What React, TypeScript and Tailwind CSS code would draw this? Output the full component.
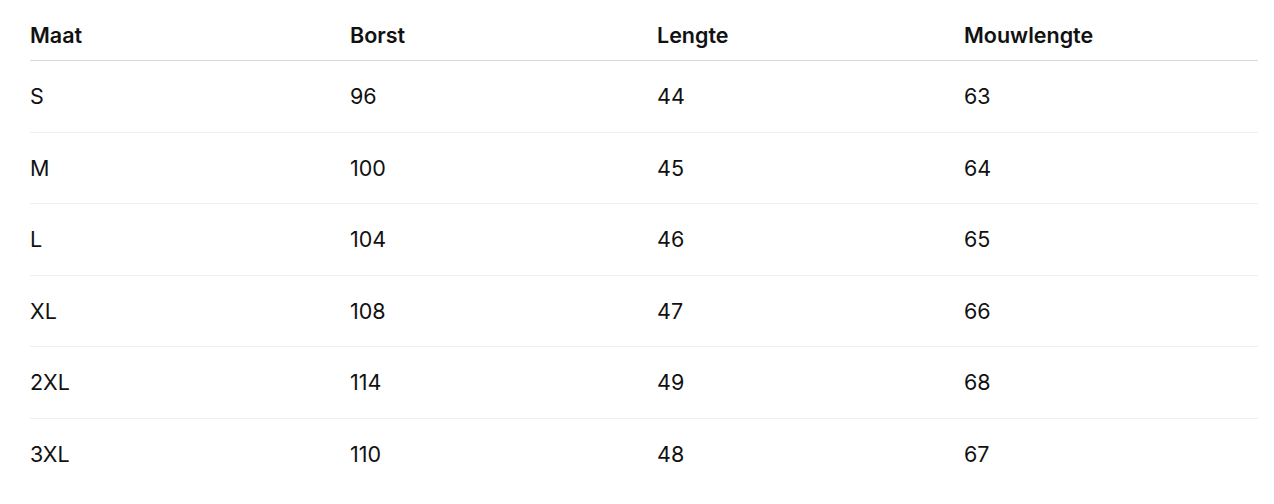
const ROWS = [
  ['S', '96', '44', '63'],
  ['M', '100', '45', '64'],
  ['L', '104', '46', '65'],
  ['XL', '108', '47', '66'],
  ['2XL', '114', '49', '68'],
  ['3XL', '110', '48', '67'],
]

const HEADERS = ['Maat', 'Borst', 'Lengte', 'Mouwlengte']

export default function App() {
  return (
    <div className="min-h-screen bg-white pl-[30px] pr-[16px] pt-[10px] text-[#111] font-['Inter',sans-serif] text-[21.5px]">
      <div className="grid h-[51px] grid-cols-[320px_307px_307px_1fr] items-center border-b border-[#d9d9d9] font-semibold">
        {HEADERS.map((h) => (
          <div key={h}>{h}</div>
        ))}
      </div>
      {ROWS.map((row, i) => (
        <div
          key={row[0]}
          className={`grid h-[71.5px] grid-cols-[320px_307px_307px_1fr] items-center ${
            i < ROWS.length - 1 ? 'border-b border-[#efefef]' : ''
          }`}
        >
          {row.map((cell, j) => (
            <div key={j}>{cell}</div>
          ))}
        </div>
      ))}
    </div>
  )
}
